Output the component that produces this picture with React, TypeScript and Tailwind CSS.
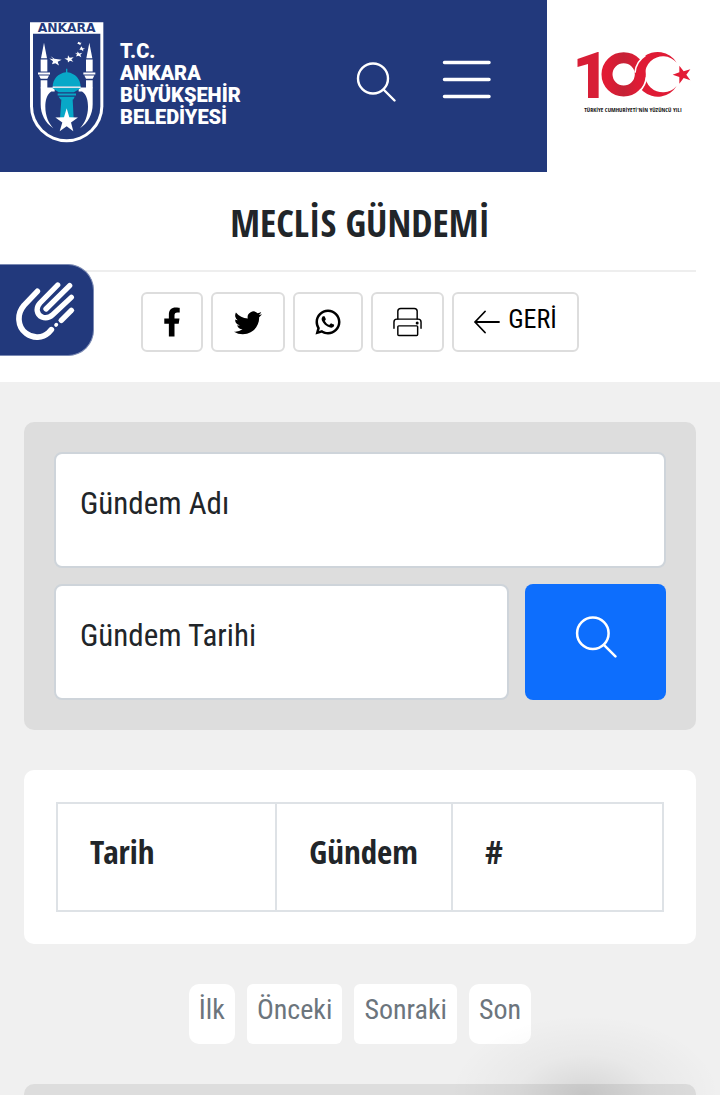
import React from "react";
import { FaFacebookF } from "react-icons/fa";
import { BsTwitter } from "react-icons/bs";
import { RiWhatsappLine } from "react-icons/ri";

const Emblem: React.FC = () => {
    return (
        <svg viewBox="0 0 222 362" className="w-[74px] h-[121px] shrink-0" aria-hidden="true">
            {/* shield */}
            <path d="M0 0H220V252A110 108 0 0 1 0 252Z" fill="#fff" />
            <path d="M9 35H211V252A101 99 0 0 1 9 252Z" fill="#22397c" />
            <text x="110" y="30" textAnchor="middle" fontSize="37" fontWeight="700" fontFamily="DejaVu Sans" fill="#22397c">ANKARA</text>
            {/* minarets */}
            <g fill="#fff">
                <path d="M42 62L51 108H33ZM32 112H52V148H32ZM24 151H60V157H24ZM27 160H57L52 170H32ZM32 174H52V198H32Z" />
                <path d="M178 62L187 108H169ZM168 112H188V148H168ZM160 151H196V157H160ZM163 160H193L188 170H168ZM168 174H188V198H168Z" />
                <path d="M32 196H74V208H64C50 216 46 236 46 254C46 282 56 304 70 318C46 302 32 276 32 246Z" />
                <path d="M188 196H146V208H156C170 216 174 236 174 254C174 282 164 304 150 318C174 302 188 276 188 246Z" />
                <path d="M62 102L73 110L95 113L83 119L87 130L76 123L66 126L69 117L58 109L70 111Z" />
                <path d="M114 99L119 107L131 105L124 112L130 119L120 116L114 121L113 114L103 109L113 108Z" />
                <path d="M142 88L148 94L157 92L151 98L154 105L146 101L138 103L141 97L135 92L142 94Z" />
                <path d="M154 72L158 78L165 79L159 82L160 87L154 83L148 83L151 78ZM145 59L151 62L155 62L152 65L151 69L147 66L142 65Z" />
            </g>
            {/* tower */}
            <path d="M108 140H112V150C136 153 152 171 152 194H68C68 171 84 153 108 150Z" fill="#08a8c8" />
            <path d="M66 197H154L132 210H86Z" fill="#08a8c8" />
            <path d="M83 214H138V220H83ZM86 224H134L130 232H92ZM94 232H128L131 290H90Z" fill="#08a8c8" />
            <path d="M68 195H152" stroke="#fff" strokeWidth="4" />
            <path d="M110 258L118 285L144 286L123 301L130 327L110 312L89 327L97 301L76 286L102 285Z" fill="#fff" />
        </svg>
    );
};

const CentenaryLogo: React.FC = () => {
    return (
        <svg viewBox="740 55 345 195" className="w-[115px] h-[65px] overflow-visible" role="img" aria-label="100. Yıl">
            <defs>
                <linearGradient id="red" x1="0" x2="1">
                    <stop offset="0" stopColor="#e11b34" />
                    <stop offset=".5" stopColor="#c52236" />
                    <stop offset="1" stopColor="#e31b35" />
                </linearGradient>
            </defs>
            <text x="729" y="203" fontSize="194" fontWeight="900" fontFamily="Roboto" fill="#d81e36">1</text>
            <circle cx="883" cy="131" r="50" fill="none" stroke="url(#red)" strokeWidth="33" />
            <path d="M1042 96A67 67 0 1 0 1042 166A54 54 0 1 1 1042 96Z" fill="#df1b35" />
            <path d="M948 75A67 67 0 0 0 917 126M951 140A67 67 0 0 1 930 182" fill="none" stroke="#fff" strokeWidth="5" />
            <path d="M1030 132L1050 125L1050 105L1063 122L1083 116L1071 132L1083 149L1063 142L1050 159L1050 139Z" fill="#e31b35" />
            <text x="911" y="245" textAnchor="middle" fontSize="18" fontWeight="700" fontFamily="Open Sans Condensed" fill="#111">TÜRKİYE CUMHURİYETİ'NİN YÜZÜNCÜ YILI</text>
        </svg>
    );
};

const SearchIcon: React.FC<{ className: string }> = ({ className }) => {
    return (
        <svg viewBox="0 0 40 40" className={className} fill="none" stroke="currentColor" strokeWidth="2.4" strokeLinecap="round" aria-hidden="true">
            <circle cx="17" cy="16.5" r="15" />
            <path d="M27.500 27.500L38.500 38.500" />
        </svg>
    );
};

const HandIcon: React.FC = () => {
    return (
        <svg viewBox="15 60 180 180" className="w-[60px] h-[60px]" fill="none" stroke="#fff" strokeLinecap="round" strokeLinejoin="round" aria-hidden="true">
            <path d="M82 94L42 136C20 162 22 200 48 220C70 237 98 234 116 218L124 209" strokeWidth="17" />
            <path d="M143 75L90 129C76 144 80 164 96 171C108 176 118 173 128 164L184 112" strokeWidth="16" />
            <path d="M179 77L108 147" strokeWidth="16" />
            <path d="M154 181L184 151" strokeWidth="16" />
            <path d="M138 195L139 194" strokeWidth="11" />
        </svg>
    );
};

const PrinterIcon: React.FC = () => {
    return (
        <svg viewBox="0 0 30 30" className="w-[29px] h-[30px]" fill="none" stroke="#000" strokeWidth="1.5" strokeLinecap="round" strokeLinejoin="round" aria-hidden="true">
            <path d="M5 12V4Q5 1 8 1H22Q25 1 25 4V12" />
            <path d="M1 21.500V15Q1 12 4 12H26Q29 12 29 15V21.500" />
            <rect x="5" y="19" width="20.500" height="10" rx="1" />
            <circle cx="25" cy="16" r=".8" fill="#000" />
        </svg>
    );
};

const shareButton = "h-[60px] px-5 flex items-center justify-center border-2 border-[#dddddd] rounded-md bg-white text-black";
const field = "block w-full h-[116px] px-6 border-2 border-[#ced4da] rounded-lg bg-white text-[31px] text-[#212529]";
const fieldLabel = "absolute left-[26px] top-8 text-[31px] leading-10 pointer-events-none";
const cell = "border-2 border-[#dee2e6] px-8 pt-7 pb-[38px] text-left font-bold leading-10";
const pageLink = "h-[60px] px-[10px] pb-2 flex items-center bg-white text-[#6c757d]";

const App: React.FC = () => {
    return (
        <div className="relative min-h-screen flex flex-col overflow-hidden bg-white text-[#212529] font-['Roboto_Condensed','Roboto',sans-serif]">
            <header className="flex h-[172px]">
                <div className="w-[76%] bg-[#22397c] flex items-start pl-[30px] pt-[22px] pr-14">
                    <a href="#" className="flex text-white">
                        <Emblem />
                        <span className="ml-4 mt-[18px] text-xl leading-[22px] font-black font-['Roboto',sans-serif]">
                            T.C.<br />ANKARA<br />BÜYÜKŞEHİR<br />BELEDİYESİ
                        </span>
                    </a>
                    <button type="button" aria-label="Ara" className="ml-auto mt-10 text-white">
                        <SearchIcon className="w-10 h-10" />
                    </button>
                    <button type="button" aria-label="Menü" className="ml-[46px] mt-[38px]">
                        <svg viewBox="0 0 49 39" className="w-[49px] h-[39px]" stroke="#fff" strokeWidth="3.500" strokeLinecap="round" aria-hidden="true">
                            <path d="M2.500 2.500H47M2.500 19.500H47M2.500 36.500H47" />
                        </svg>
                    </button>
                </div>
                <div className="flex-1 flex items-start justify-center pt-[49px]">
                    <CentenaryLogo />
                </div>
            </header>

            <section className="px-6 pb-[30px]">
                <h1 className="pt-[26px] pb-6 text-center text-[38px] leading-[48px] font-bold font-['Open_Sans_Condensed',sans-serif]">MECLİS GÜNDEMİ</h1>
                <div className="border-t-2 border-[#eeeeee] pt-5 flex justify-center gap-2">
                    <a href="#" aria-label="Facebook" className={shareButton}><FaFacebookF className="w-[18px] h-[30px]" /></a>
                    <a href="#" aria-label="Twitter" className={shareButton}><BsTwitter className="w-[30px] h-7" /></a>
                    <a href="#" aria-label="WhatsApp" className={shareButton}><RiWhatsappLine className="w-[30px] h-[30px] -mx-[2px]" /></a>
                    <button type="button" aria-label="Yazdır" className={shareButton}><PrinterIcon /></button>
                    <a href="#" className={shareButton}>
                        <svg viewBox="0 0 26 24" className="w-[26px] h-6 mr-2" fill="none" stroke="#000" strokeWidth="1.800" strokeLinecap="round" strokeLinejoin="round" aria-hidden="true">
                            <path d="M25 12H1M11 1.500L1 12L11 22.500" />
                        </svg>
                        <span className="text-[26px] leading-8 pb-[6px]">GERİ</span>
                    </a>
                </div>
            </section>

            {/* sign language widget */}
            <button type="button" aria-label="İşaret dili" className="absolute left-0 top-[264px] w-[94px] h-[92px] pl-[15px] flex items-center border border-l-0 border-[#7a89b3] rounded-r-[26px] bg-[#22397c]">
                <HandIcon />
            </button>

            <main className="flex-1 flex flex-col gap-10 px-6 pt-10 bg-[#f0f0f0]">
                <form className="flex flex-col gap-4 p-[30px] rounded-[10px] bg-[#dddddd]">
                    <div className="relative">
                        <input id="name" type="text" className={field} />
                        <label htmlFor="name" className={fieldLabel}>Gündem Adı</label>
                    </div>
                    <div className="flex gap-4">
                        <div className="relative flex-1">
                            <input id="date" type="text" className={field} />
                            <label htmlFor="date" className={fieldLabel}>Gündem Tarihi</label>
                        </div>
                        <button type="button" aria-label="Ara" className="w-[141px] pb-[10px] flex items-center justify-center rounded-lg bg-[#0d6efd] text-white">
                            <SearchIcon className="w-[42px] h-[42px]" />
                        </button>
                    </div>
                </form>

                <div className="p-8 rounded-[10px] bg-white">
                    <table className="w-full table-fixed border-collapse text-[33px] font-['Open_Sans_Condensed',sans-serif]">
                        <thead>
                            <tr>
                                <th className={`${cell} w-[36.2%]`}>Tarih</th>
                                <th className={`${cell} w-[29%]`}>Gündem</th>
                                <th className={cell}>#</th>
                            </tr>
                        </thead>
                    </table>
                </div>

                <nav aria-label="Sayfalar" className="flex justify-center gap-3 text-[28px] leading-10">
                    <a href="#" className={`${pageLink} rounded-[10px]`}>İlk</a>
                    <a href="#" className={`${pageLink} rounded-md`}>Önceki</a>
                    <a href="#" className={`${pageLink} rounded-md`}>Sonraki</a>
                    <a href="#" className={`${pageLink} rounded-[10px]`}>Son</a>
                </nav>

                <div className="flex-1 min-h-[11px] rounded-t-[10px] bg-[#dddddd]" />
            </main>

            {/* soft shadow at the bottom edge */}
            <div className="absolute bottom-0 right-0 w-[270px] h-20 pointer-events-none bg-[radial-gradient(ellipse_50%_100%_at_50%_100%,rgba(0,0,0,0.11),rgba(0,0,0,0.03)_50%,transparent)]" />
        </div>
    );
};

export default App;
